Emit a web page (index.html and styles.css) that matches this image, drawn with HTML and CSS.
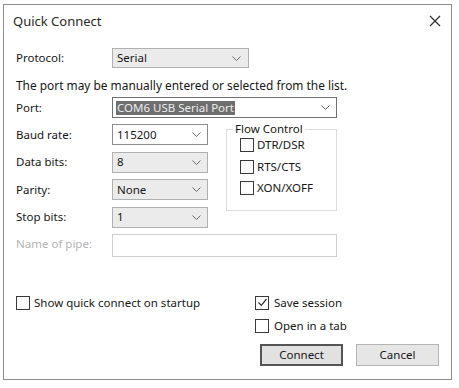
FILE: index.html
```html
<!DOCTYPE html>
<html>

<head>
	<meta charset="utf-8">
	<title>Quick Connect</title>
	<link rel="stylesheet" href="styles.css">
</head>

<body>
	<div class="dialog">
		<div class="titlebar">
			<span class="title">Quick Connect</span>
			<svg class="close" width="12" height="12" viewBox="0 0 12 12">
				<path d="M1 1 L11 11 M11 1 L1 11" stroke="#333" stroke-width="1.3" fill="none" />
			</svg>
		</div>
		<div class="form">
			<div class="protocol-row">
				<span class="label">Protocol:</span>
				<div class="combo combo-gray combo-protocol"><span>Serial</span>
					<svg class="arrow" width="9" height="5" viewBox="0 0 9 5"><path d="M0.5 0.5 L4.5 4.5 L8.5 0.5" stroke="#666" fill="none" /></svg>
				</div>
			</div>
			<p class="hint">The port may be manually entered or selected from the list.</p>
			<div class="fields">
				<span class="label">Port:</span>
				<div class="combo combo-port"><span class="selected">COM6 USB Serial Port</span>
					<svg class="arrow" width="9" height="5" viewBox="0 0 9 5"><path d="M0.5 0.5 L4.5 4.5 L8.5 0.5" stroke="#666" fill="none" /></svg>
				</div>

				<span class="label">Baud rate:</span>
				<div class="combo combo-baud"><span>115200</span>
					<svg class="arrow" width="9" height="5" viewBox="0 0 9 5"><path d="M0.5 0.5 L4.5 4.5 L8.5 0.5" stroke="#666" fill="none" /></svg>
				</div>

				<fieldset class="flow">
					<legend>Flow Control</legend>
					<label class="check"><span class="box"></span>DTR/DSR</label>
					<label class="check"><span class="box"></span>RTS/CTS</label>
					<label class="check"><span class="box"></span>XON/XOFF</label>
				</fieldset>

				<span class="label">Data bits:</span>
				<div class="combo combo-gray"><span>8</span>
					<svg class="arrow" width="9" height="5" viewBox="0 0 9 5"><path d="M0.5 0.5 L4.5 4.5 L8.5 0.5" stroke="#666" fill="none" /></svg>
				</div>

				<span class="label">Parity:</span>
				<div class="combo combo-gray"><span>None</span>
					<svg class="arrow" width="9" height="5" viewBox="0 0 9 5"><path d="M0.5 0.5 L4.5 4.5 L8.5 0.5" stroke="#666" fill="none" /></svg>
				</div>

				<span class="label">Stop bits:</span>
				<div class="combo combo-gray"><span>1</span>
					<svg class="arrow" width="9" height="5" viewBox="0 0 9 5"><path d="M0.5 0.5 L4.5 4.5 L8.5 0.5" stroke="#666" fill="none" /></svg>
				</div>

				<span class="label disabled">Name of pipe:</span>
				<div class="pipe"></div>
			</div>
		</div>
		<div class="options">
			<label class="check"><span class="box"></span>Show quick connect on startup</label>
			<div class="options-right">
				<label class="check"><span class="box">
						<svg width="11" height="11" viewBox="0 0 11 11"><path d="M1.5 5.5 L4.3 8.3 L9.5 2" stroke="#333" stroke-width="1.2" fill="none" /></svg>
					</span>Save session</label>
				<label class="check"><span class="box"></span>Open in a tab</label>
			</div>
		</div>
		<div class="buttons">
			<button class="btn btn-default">Connect</button>
			<button class="btn">Cancel</button>
		</div>
	</div>
</body>

</html>
```

FILE: styles.css
```css
* {
	margin: 0;
	padding: 0;
	box-sizing: border-box;
}
body {
	background-color: #ffffff;
	font-family: "Noto Sans", "Open Sans", sans-serif;
	font-size: 11.5px;
	color: #161616;
}
.dialog {
	margin: 4px 0 0 3px;
	width: 449px;
	height: 376px;
	border: 1px solid #8f8f8f;
	background-color: #ffffff;
}
.titlebar {
	height: 32px;
	display: flex;
	align-items: center;
	justify-content: space-between;
	padding: 0 10px 0 9px;
}
.title {
	font-size: 13px;
	color: #2a2a2a;
}
.form {
	padding-left: 12px;
}
.label {
	display: block;
	align-self: center;
	line-height: 14px;
}
.label.disabled {
	color: #b4b4b4;
}
.protocol-row {
	display: flex;
	align-items: center;
	margin-top: 11px;
	height: 20px;
}
.protocol-row .label {
	width: 96px;
}
.combo {
	height: 100%;
	border: 1px solid #8c8c8c;
	background-color: #ffffff;
	display: flex;
	align-items: center;
	justify-content: space-between;
	padding: 0 6px 0 4px;
	line-height: 14px;
}
.combo-gray {
	background-color: #ebebeb;
	border-color: #b0b0b0;
}
.combo-protocol {
	width: 137px;
	height: 20px;
	padding-right: 7px;
}
.combo-port {
	grid-column: 2 / 5;
	border-color: #707070;
	padding-left: 3px;
}
.selected {
	background-color: #6e6e6e;
	color: #ececec;
	padding: 0 1px;
}
.hint {
	margin-top: 9px;
	line-height: 16px;
	font-size: 11.9px;
}
.fields {
	margin-top: 4px;
	display: grid;
	grid-template-columns: 96px 96px 18px 111px;
	grid-auto-rows: 21px;
	row-gap: 6.4px;
}
.fields .label {
	grid-column: 1;
}
.fields .combo-gray,
.combo-baud {
	grid-column: 2;
}
.flow {
	grid-column: 4;
	grid-row: 2 / 6;
	margin-top: -2px;
	height: 89px;
	border: 1px solid #dcdcdc;
	padding: 0 0 0 13px;
	display: flex;
	flex-direction: column;
	gap: 7.5px;
}
.flow legend {
	margin-left: -7px;
	padding: 0 2px;
	line-height: 14px;
	margin-bottom: 2px;
}
.pipe {
	grid-column: 2 / 5;
	height: 23px;
	border: 1px solid #cfcfcf;
}
.check {
	display: flex;
	align-items: center;
	line-height: 14px;
	gap: 3px;
}
.box {
	width: 14px;
	height: 14px;
	border: 1px solid #3a3a3a;
	background-color: #ffffff;
	display: flex;
	align-items: center;
	justify-content: center;
}
.options {
	display: flex;
	padding: 0 0 0 12px;
	margin-top: 41px;
}
.options > .check {
	width: 239px;
	align-self: flex-start;
	gap: 4px;
}
.options-right {
	display: flex;
	flex-direction: column;
	gap: 9px;
}
.options-right .check {
	gap: 5px;
}
.buttons {
	display: flex;
	justify-content: flex-end;
	gap: 13px;
	padding-right: 12px;
	margin-top: 11px;
}
.btn {
	width: 83px;
	height: 22px;
	font-family: "Noto Sans", "Open Sans", sans-serif;
	font-size: 11.5px;
	color: #161616;
	background-color: #e6e6e6;
	border: 1px solid #b4b4b4;
}
.btn-default {
	border: 2px solid #555555;
	background-color: #e1e1e1;
}
```
